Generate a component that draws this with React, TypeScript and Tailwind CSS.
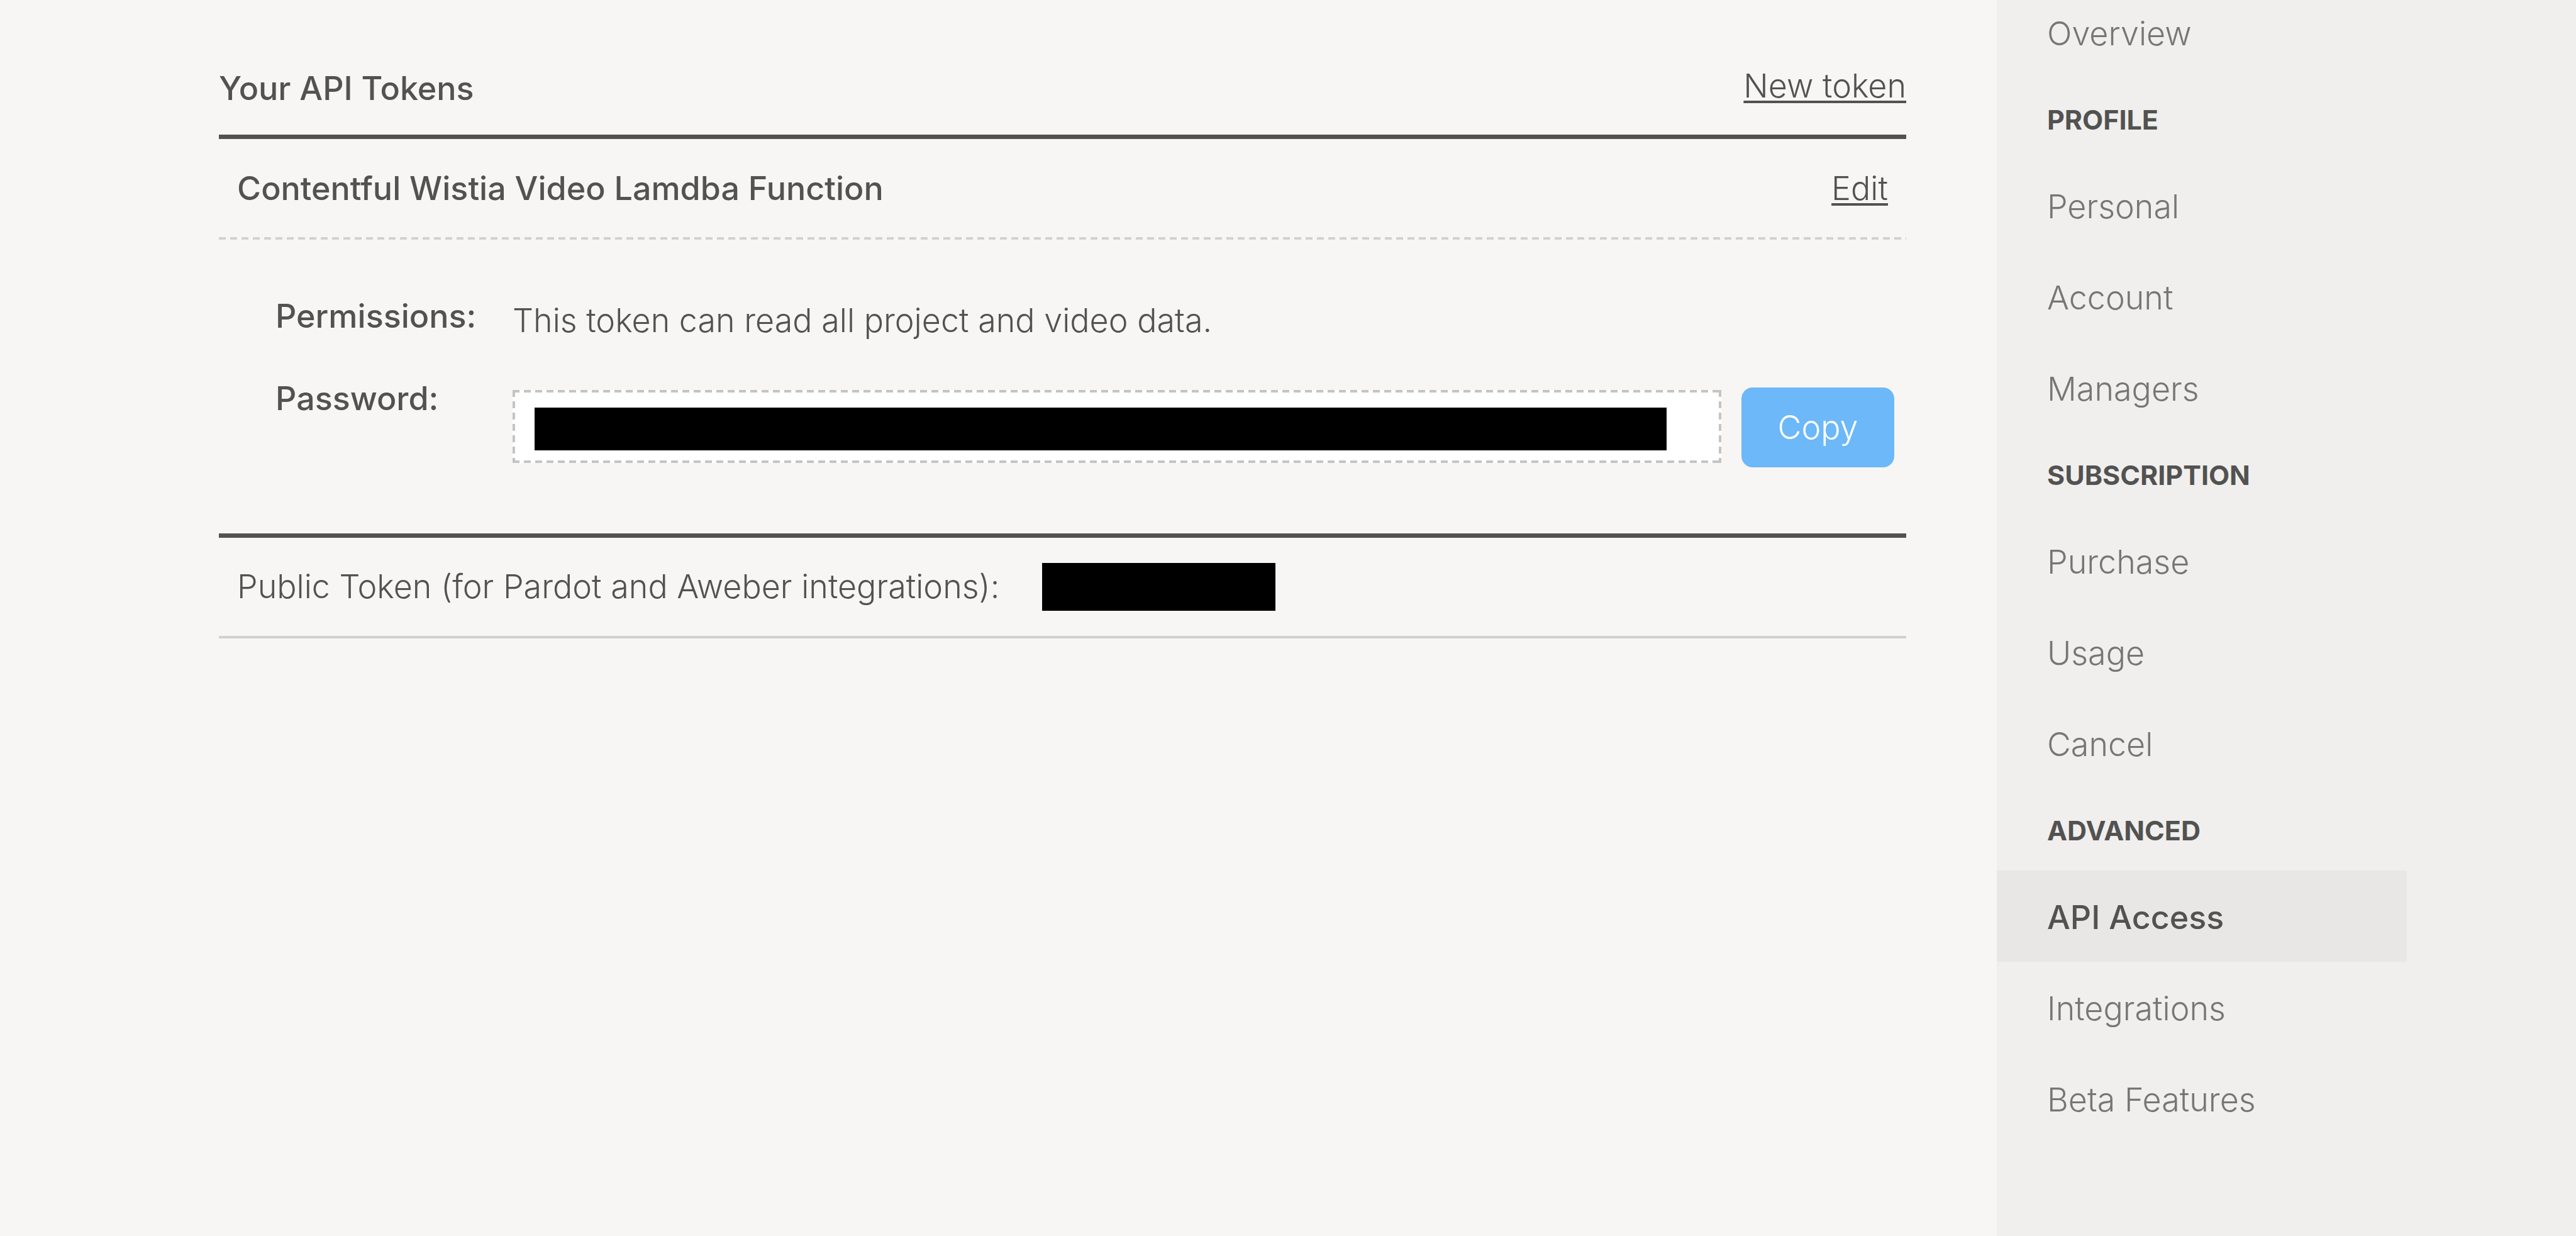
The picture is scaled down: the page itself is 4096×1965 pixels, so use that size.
type NavSection = { title?: string; items: string[] };

const sections: NavSection[] = [
  { items: ["Overview"] },
  { title: "Profile", items: ["Personal", "Account", "Managers"] },
  { title: "Subscription", items: ["Purchase", "Usage", "Cancel"] },
  { title: "Advanced", items: ["API Access", "Integrations", "Beta Features"] },
];

const activeItem = "API Access";

function DashedRule() {
  return (
    <div className="h-[4px] bg-[repeating-linear-gradient(to_right,#d2d1cf_0_11px,transparent_11px_18px)]" />
  );
}

function Sidebar() {
  return (
    <aside className="w-[921px] shrink-0 overflow-hidden bg-[#f0efed]">
      <nav aria-label="Account settings" className="-mt-[21px] w-[652px]">
        {sections.map((section) => (
          <section key={section.items[0]}>
            {section.title && (
              <h2 className="px-[80px] pt-[30px] pb-[28px] text-[43px] leading-[72px] font-bold text-[#525251] uppercase">
                {section.title}
              </h2>
            )}
            <ul>
              {section.items.map((item) => (
                <li key={item}>
                  <a
                    href="#"
                    aria-current={item === activeItem ? "page" : undefined}
                    className={
                      item === activeItem
                        ? "block bg-[#e8e7e5] px-[80px] pt-[39px] pb-[34px] font-medium text-[#525251]"
                        : "block px-[80px] pt-[39px] pb-[34px] text-[#767675]"
                    }
                  >
                    {item}
                  </a>
                </li>
              ))}
            </ul>
          </section>
        ))}
      </nav>
    </aside>
  );
}

function TokenDetails() {
  return (
    <div className="grid grid-cols-[377px_1fr] gap-y-[52px] pt-[86px] pr-[19px] pb-[105px] pl-[90px]">
      <span className="font-medium">Permissions:</span>
      <p className="pt-[7px]">This token can read all project and video data.</p>
      <label htmlFor="token-password" className="font-medium">
        Password:
      </label>
      <div className="flex items-start gap-[32px] pt-[18px]">
        <div className="mt-[4px] flex-1 bg-white bg-[repeating-linear-gradient(to_right,#c4c4c4_0_11px,transparent_11px_18px),repeating-linear-gradient(to_right,#c4c4c4_0_11px,transparent_11px_18px),repeating-linear-gradient(to_bottom,#c4c4c4_0_11px,transparent_11px_18px),repeating-linear-gradient(to_bottom,#c4c4c4_0_11px,transparent_11px_18px)] bg-[length:100%_4px,100%_4px,4px_100%,4px_100%] bg-[position:left_top,left_bottom,left_top,right_top] bg-no-repeat pt-[28px] pr-[87px] pb-[20px] pl-[35px]">
          <input
            id="token-password"
            type="password"
            readOnly
            className="block h-[68px] w-full bg-black text-black outline-none"
          />
        </div>
        <button type="button" className="h-[127px] w-[243px] rounded-[18px] bg-[#6cb8f9] text-white">
          Copy
        </button>
      </div>
    </div>
  );
}

export default function App() {
  return (
    <div className="flex min-h-screen bg-[#f7f6f4] font-[Inter,'Liberation_Sans',sans-serif] text-[52px] leading-[72px] font-light text-[#525251]">
      <main className="flex-1 pt-[105px] pr-[144px] pl-[348px]">
        <header className="flex items-start justify-between border-b-[7px] border-[#525251] pb-[37px]">
          <h1 className="font-medium">Your API Tokens</h1>
          <a
            href="#"
            className="leading-[64px] underline decoration-[4px] underline-offset-[5px]"
          >
            New token
          </a>
        </header>
        <section>
          <div className="flex items-center justify-between px-[29px] pt-[43px] pb-[41px]">
            <h2 className="font-medium">Contentful Wistia Video Lamdba Function</h2>
            <a href="#" className="underline decoration-[4px] underline-offset-[5px]">
              Edit
            </a>
          </div>
          <DashedRule />
          <TokenDetails />
        </section>
        <footer className="flex items-center gap-[68px] border-t-[7px] border-b-[4px] border-t-[#525251] border-b-[#d2d1cf] px-[29px] pt-[40px] pb-[40px]">
          <span>Public Token (for Pardot and Aweber integrations):</span>
          <span className="h-[76px] w-[371px] bg-black" />
        </footer>
      </main>
      <Sidebar />
    </div>
  );
}
